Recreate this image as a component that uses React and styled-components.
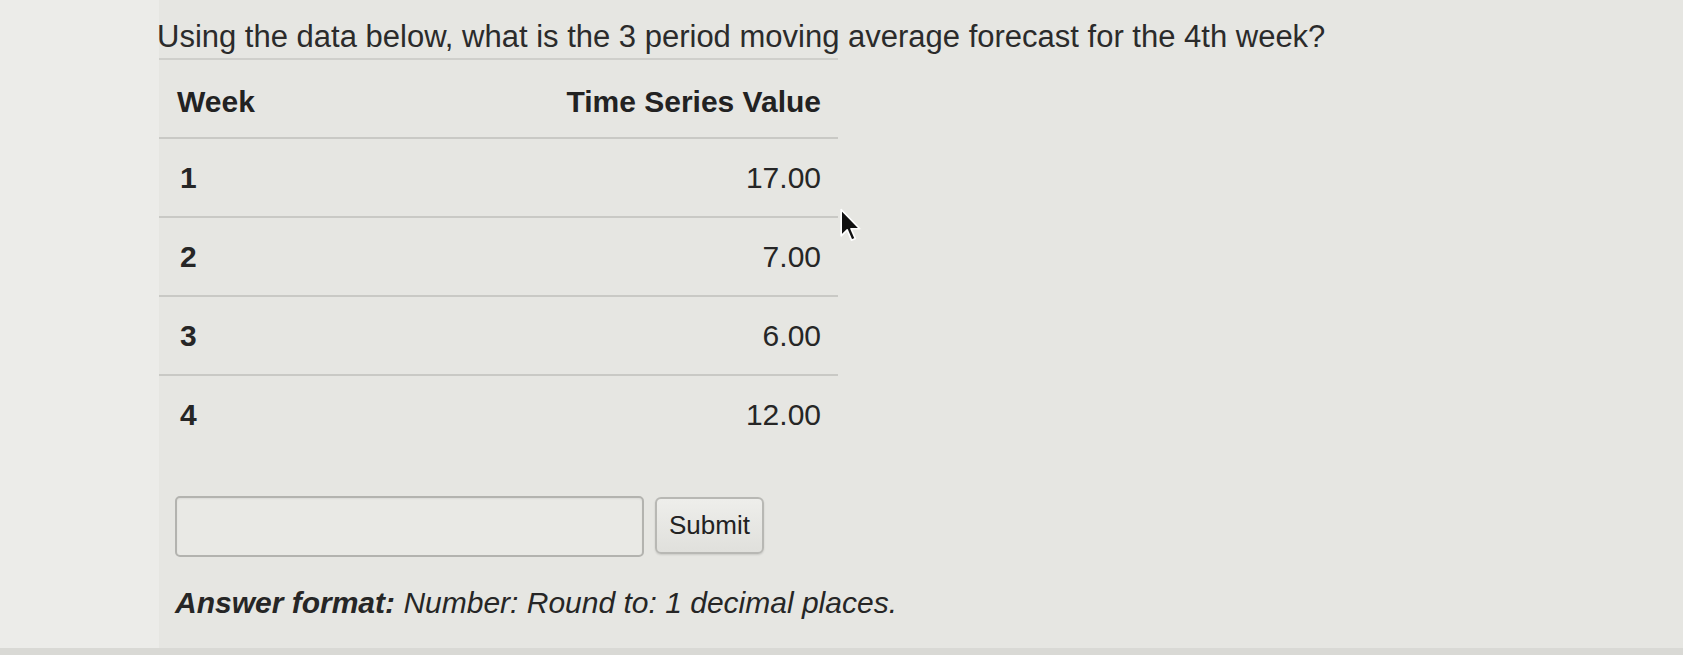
import React from "react";
import styled, { createGlobalStyle } from "styled-components";

const Global = createGlobalStyle`
  html, body { margin: 0; padding: 0; }
  body {
    background: #d9d9d5;
    font-family: "Liberation Sans", Arial, Helvetica, sans-serif;
    color: #262626;
    overflow: hidden;
  }
`;

const Page = styled.div`
  display: flex;
  width: 1683px;
  height: 648px;
  background: #ecece9;
`;

const Gutter = styled.div`
  width: 159px;
  flex: none;
`;

const Panel = styled.main`
  position: relative;
  flex: 1;
  display: flex;
  flex-direction: column;
  align-items: flex-start;
  background: #e6e6e2;
  padding-top: 19px;
`;

const Question = styled.h1`
  margin: 0 0 3px -2px;
  font-size: 31px;
  font-weight: normal;
  line-height: 36px;
  color: #2b2b2b;
  white-space: nowrap;
`;

const Table = styled.table`
  width: 679px;
  border-collapse: collapse;
  border-top: 2px solid #cfcfcb;
  font-size: 30px;
`;

const Row = styled.tr`
  height: 79px;
  border-bottom: ${(p) => (p.$last ? "none" : "2px solid #c9c9c5")};
`;

const HeadCell = styled.th`
  padding: 6px 17px 0 ${(p) => (p.$right ? "0" : "18px")};
  text-align: ${(p) => (p.$right ? "right" : "left")};
  font-weight: bold;
  color: #222;
  vertical-align: middle;
`;

const Cell = styled.td`
  padding: 0 ${(p) => (p.$right ? "17px" : "0")} 0 ${(p) => (p.$right ? "0" : "21px")};
  text-align: ${(p) => (p.$right ? "right" : "left")};
  font-weight: ${(p) => (p.$bold ? "bold" : "normal")};
  color: #262626;
  vertical-align: middle;
`;

const AnswerRow = styled.div`
  display: flex;
  align-items: flex-start;
  gap: 11px;
  margin: 42px 0 0 16px;
`;

const Input = styled.input`
  box-sizing: border-box;
  width: 469px;
  height: 61px;
  border: 2px solid #b3b3af;
  border-radius: 5px;
  background: #e9e9e5;
  box-shadow: inset 0 1px 2px rgba(0, 0, 0, 0.06);
  outline: none;
`;

const Button = styled.button`
  box-sizing: border-box;
  width: 109px;
  height: 57px;
  margin-top: 1px;
  border: 2px solid #b8b8b4;
  border-radius: 6px;
  background: linear-gradient(#eeeeeb, #e0e0dc);
  box-shadow: 0 1px 2px rgba(0, 0, 0, 0.12);
  font-family: "Liberation Sans", Arial, sans-serif;
  font-size: 26px;
  color: #222;
  padding: 0;
`;

const Format = styled.p`
  margin: 29px 0 0 16px;
  font-size: 30px;
  line-height: 34px;
  font-style: italic;
  color: #262626;
  white-space: nowrap;
`;

const Strong = styled.b`
  font-weight: bold;
`;

const Pointer = styled.svg`
  position: absolute;
  left: 680px;
  top: 208px;
`;

const rows = [
  ["1", "17.00"],
  ["2", "7.00"],
  ["3", "6.00"],
  ["4", "12.00"],
];

export default function App() {
  return (
    <>
      <Global />
      <Page>
        <Gutter />
        <Panel>
          <Question>
            Using the data below, what is the 3 period moving average forecast for the 4th week?
          </Question>
          <Table>
            <thead>
              <Row>
                <HeadCell>Week</HeadCell>
                <HeadCell $right>Time Series Value</HeadCell>
              </Row>
            </thead>
            <tbody>
              {rows.map(([w, v], i) => (
                <Row key={w} $last={i === rows.length - 1}>
                  <Cell $bold>{w}</Cell>
                  <Cell $right>{v}</Cell>
                </Row>
              ))}
            </tbody>
          </Table>
          <AnswerRow>
            <Input type="text" aria-label="answer" />
            <Button type="button">Submit</Button>
          </AnswerRow>
          <Format>
            <Strong>Answer format:</Strong> Number: Round to: 1 decimal places.
          </Format>
          <Pointer width="24" height="36" viewBox="0 0 22 32">
            <path
              d="M2 1 L2 25 L7.5 19.5 L11.5 29 L15 27.5 L11 18.5 L19 18.5 Z"
              fill="#111"
              stroke="#fff"
              strokeWidth="1.5"
              strokeLinejoin="round"
            />
          </Pointer>
        </Panel>
      </Page>
    </>
  );
}
